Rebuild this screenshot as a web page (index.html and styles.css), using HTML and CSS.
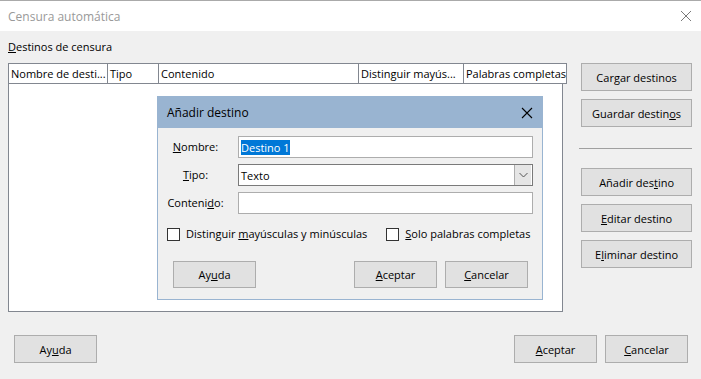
FILE: index.html
```html
<!DOCTYPE html>
<html lang="es">
  <head>
    <meta charset="UTF-8" />
    <title>Censura automática</title>
    <link rel="stylesheet" href="styles.css">
  </head>
  <body>
    <div class="window">
      <div class="titlebar">
        <span class="title">Censura automática</span>
        <svg class="close" width="12" height="12" viewBox="0 0 12 12">
          <path d="M1 1 L11 11 M11 1 L1 11" stroke="#7a7a7a" stroke-width="1" fill="none" />
        </svg>
      </div>

      <div class="content">
        <div class="main">
          <div class="targets">
            <div class="label"><u>D</u>estinos de censura</div>
            <div class="thead">
              <div class="th col-name">Nombre de desti...</div>
              <div class="th col-type">Tipo</div>
              <div class="th col-content">Contenido</div>
              <div class="th col-case">Distinguir mayús...</div>
              <div class="th col-whole">Palabras completas</div>
            </div>
            <div class="tbody"></div>
          </div>

          <div class="side">
            <button>Car<u>g</u>ar destinos</button>
            <button>Guardar destin<u>o</u>s</button>
            <div class="sep"></div>
            <button>Añadir des<u>t</u>ino</button>
            <button><u>E</u>ditar destino</button>
            <button>E<u>l</u>iminar destino</button>
          </div>
        </div>

        <div class="footer">
          <button>Ay<u>u</u>da</button>
          <div class="footer-right">
            <button><u>A</u>ceptar</button>
            <button><u>C</u>ancelar</button>
          </div>
        </div>
      </div>

      <!-- Add target dialog, on top of the main one -->
      <div class="subdialog">
        <div class="sub-titlebar">
          <span>Añadir destino</span>
          <svg width="12" height="12" viewBox="0 0 12 12">
            <path d="M1 1 L11 11 M11 1 L1 11" stroke="#000" stroke-width="1.1" fill="none" />
          </svg>
        </div>
        <div class="sub-body">
          <div class="form">
            <div class="flabel"><u>N</u>ombre:</div>
            <div class="field"><span class="selected">Destino 1</span></div>
            <div class="flabel"><u>T</u>ipo:</div>
            <div class="field select">
              <span>Texto</span>
              <span class="drop">
                <svg width="9" height="6" viewBox="0 0 9 6">
                  <path d="M0.5 1 L4.5 5 L8.5 1" stroke="#555" stroke-width="1" fill="none" />
                </svg>
              </span>
            </div>
            <div class="flabel">Conteni<u>d</u>o:</div>
            <div class="field"></div>
          </div>

          <div class="checks">
            <label class="check"><span class="box"></span><span>Distinguir <u>m</u>ayúsculas y minúsculas</span></label>
            <label class="check"><span class="box"></span><span><u>S</u>olo palabras completas</span></label>
          </div>

          <div class="sub-buttons">
            <button class="help">Ay<u>u</u>da</button>
            <div class="footer-right">
              <button><u>A</u>ceptar</button>
              <button><u>C</u>ancelar</button>
            </div>
          </div>
        </div>
      </div>
    </div>
  </body>
</html>
```

FILE: styles.css
```css
body {
  margin: 0;
  font-family: "Open Sans", "Noto Sans", sans-serif;
  font-size: 11px;
  color: #000;
  background: #f0f0f0;
}

.window {
  position: relative;
  width: 701px;
  height: 379px;
  background: #f0f0f0;
  overflow: hidden;
}

.titlebar {
  height: 30px;
  border-top: 1px solid #aaaaaa;
  background: #fff;
  display: flex;
  align-items: center;
  justify-content: space-between;
  padding: 0 9px 0 8px;
}

.title {
  color: #999;
  font-size: 12px;
}

.content {
  padding: 8px 13px 0 8px;
}

.main {
  display: flex;
  gap: 14px;
}

.targets {
  width: 560px;
}

.label {
  line-height: 16px;
  margin-bottom: 8px;
}

.thead {
  display: flex;
  height: 19px;
  border: 1px solid #828790;
  background: #fff;
}

.th {
  line-height: 19px;
  padding-left: 2px;
  white-space: nowrap;
  overflow: hidden;
  border-right: 1px solid #828790;
  box-sizing: border-box;
}

.th:last-child {
  border-right: none;
}

.col-name { width: 99px; }
.col-type { width: 51px; }
.col-content { width: 200px; }
.col-case { width: 105px; }
.col-whole { flex: 1; }

.tbody {
  width: 553px;
  height: 227px;
  background: #fff;
  border: 1px solid #828790;
  border-top: none;
}

.side {
  width: 111px;
  display: flex;
  flex-direction: column;
  gap: 8px;
  padding-top: 24px;
}

button {
  font-family: inherit;
  font-size: 11px;
  color: #000;
  background: #e1e1e1;
  border: 1px solid #adadad;
  padding: 0;
  height: 28px;
}

.side button {
  width: 111px;
}

.sep {
  height: 1px;
  background: #a0a0a0;
  margin: 13px 0 11px -2px;
}

.footer {
  display: flex;
  justify-content: space-between;
  margin-top: 23px;
  padding-left: 6px;
}

.footer button {
  width: 83px;
}

.footer-right {
  display: flex;
  gap: 8px;
}

/* sub dialog */

.subdialog {
  position: absolute;
  left: 157px;
  top: 96px;
  width: 384px;
  height: 202px;
  border: 1px solid #99b4d1;
  background: #f0f0f0;
}

.sub-titlebar {
  height: 31px;
  background: #99b4d1;
  display: flex;
  align-items: center;
  justify-content: space-between;
  padding: 0 9px;
  font-size: 12px;
}

.sub-body {
  padding: 8px 9px 0 9px;
}

.form {
  display: grid;
  grid-template-columns: 57px 295px;
  column-gap: 14px;
  row-gap: 6px;
  grid-auto-rows: 22px;
}

.flabel {
  text-align: center;
  line-height: 22px;
}

.field {
  background: #fff;
  border: 1px solid #adadad;
  display: flex;
  align-items: center;
  padding-left: 2px;
}

.selected {
  background: #0078d7;
  color: #fff;
  line-height: 15px;
}

.select {
  border-color: #7a7a7a;
  justify-content: space-between;
  padding-right: 1px;
}

.drop {
  width: 16px;
  height: 20px;
  background: #e5e5e5;
  border-left: 1px solid #adadad;
  display: flex;
  align-items: center;
  justify-content: center;
}

.checks {
  display: flex;
  gap: 19px;
  margin-top: 12px;
  line-height: 16px;
  white-space: nowrap;
}

.check {
  display: flex;
  align-items: center;
  gap: 6px;
}

.box {
  width: 11px;
  height: 11px;
  border: 1px solid #333;
  background: #fff;
}

.sub-buttons {
  display: flex;
  justify-content: space-between;
  margin-top: 19px;
  padding: 0 5px 0 6px;
}

.sub-buttons button {
  width: 83px;
  height: 27px;
}
```
